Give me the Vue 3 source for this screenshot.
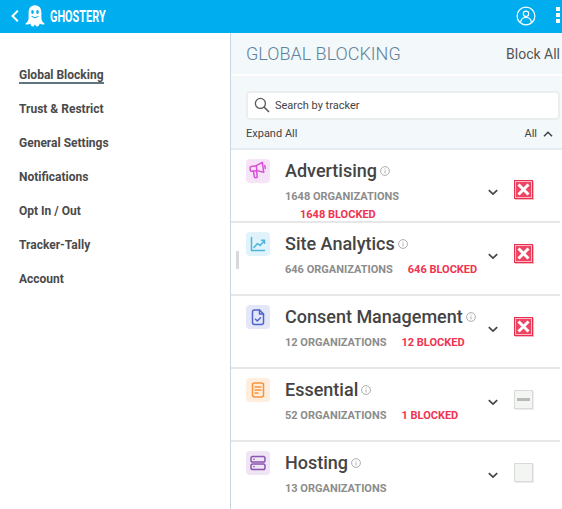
<script setup>
const nav = ['Global Blocking', 'Trust & Restrict', 'General Settings', 'Notifications', 'Opt In / Out', 'Tracker-Tally', 'Account']
const rows = [
  { name: 'Advertising', kind: 'ad', orgs: 1648, blocked: 1648, state: 'x' },
  { name: 'Site Analytics', kind: 'chart', orgs: 646, blocked: 646, state: 'x' },
  { name: 'Consent Management', kind: 'doc', orgs: 12, blocked: 12, state: 'x' },
  { name: 'Essential', kind: 'file', orgs: 52, blocked: 1, state: 'dash' },
  { name: 'Hosting', kind: 'server', orgs: 13, blocked: 0, state: 'none' }
]
</script>

<template>
  <div class="app">
    <header class="topbar">
      <svg class="back" viewBox="0 0 8 12" width="8" height="12"><path d="M6.800 .8 1.500 6l5.300 5.200" fill="none" stroke="#fff" stroke-width="2" /></svg>
      <svg class="ghost" viewBox="0 0 20 22" width="20" height="22">
        <path d="M10 .3C5.200.3 3.600 4 3.600 8v5c0 2.400-1.400 4.700-3.500 6 2.200 1 3.900.5 5.100-.4.600 2 1.500 3 2.500 3 1 0 1.500-1 2.300-2.200.8 1.200 1.300 2.200 2.300 2.200 1 0 1.900-1 2.500-3 1.200.9 2.900 1.400 5.100.4-2.100-1.300-3.500-3.600-3.500-6V8c0-4-1.600-7.700-6.400-7.700z" fill="#fff" />
        <ellipse cx="7.500" cy="7" rx="1.300" ry="1.900" fill="#00aef0" />
        <ellipse cx="12.500" cy="7" rx="1.300" ry="1.900" fill="#00aef0" />
        <path d="M6.600 11c1.700 2.100 5.100 2.100 6.800 0" fill="none" stroke="#00aef0" stroke-width="1.100" />
      </svg>
      <span class="brand">GHOSTERY</span>
      <span class="spacer"></span>
      <svg class="user" viewBox="0 0 20 20" width="20" height="20" fill="none" stroke="#fff" stroke-width="1.200">
        <circle cx="10" cy="10" r="8.900" />
        <circle cx="10" cy="7.800" r="2.700" />
        <path d="M4.600 16.500c.3-3.400 2.400-5 5.400-5s5.100 1.600 5.400 5" />
      </svg>
      <span class="dots"><i></i><i></i><i></i></span>
    </header>
    <div class="body">
      <nav class="side">
        <a v-for="(n, i) in nav" :key="n" class="nav-item"><span :class="{ active: i === 0 }">{{ n }}</span></a>
      </nav>
      <main class="panel">
        <span class="handle"></span>
        <div class="head">
          <span class="title">GLOBAL BLOCKING</span>
          <span class="block-all">Block All</span>
        </div>
        <div class="tools">
          <div class="search">
            <svg viewBox="0 0 16 16" width="16" height="16" fill="none" stroke="#5a5a5a" stroke-width="1.300"><circle cx="6.400" cy="6.400" r="5" /><path d="m10 10 5 5" stroke-width="1.600" /></svg>
            <span>Search by tracker</span>
          </div>
          <div class="expand">
            <span>Expand All</span>
            <span class="all">All
              <svg viewBox="0 0 10 6" width="10" height="6"><path d="M1 5.200 5 1.300l4 3.900" fill="none" stroke="#444" stroke-width="1.600" /></svg>
            </span>
          </div>
        </div>
        <section v-for="r in rows" :key="r.name" class="row">
          <span class="icon" :class="r.kind">
            <svg viewBox="0 0 24 24" width="24" height="24" fill="none" stroke="currentColor" stroke-width="1.500" stroke-linejoin="round" stroke-linecap="round">
              <g v-if="r.kind === 'ad'" transform="rotate(-8 12 12)">
                <path d="M6 6.500h5l6.500-2.500v10L11 11.500H6A1.500 1.500 0 0 1 4.500 10V8A1.500 1.500 0 0 1 6 6.500z" />
                <path d="M7.500 11.500v5.300a1.500 1.500 0 0 0 3 0v-5.300M19.500 7.500v3M11 6.500v5" />
              </g>
              <template v-else-if="r.kind === 'chart'">
                <path d="M5.500 5.500v13h13" />
                <path d="m8 15.500 3.500-4 2.500 2 4.500-5M15.500 8.300h3v3" />
              </template>
              <template v-else-if="r.kind === 'doc'">
                <path d="M8.500 5h5l4 4v8.500a2 2 0 0 1-2 2h-7a2 2 0 0 1-2-2V7a2 2 0 0 1 2-2z" />
                <path d="M13.500 5v4h4M9.500 14.300l1.800 1.700 3.200-3.200" />
              </template>
              <template v-else-if="r.kind === 'file'">
                <rect x="6.500" y="5" width="11" height="14" rx="2" />
                <path d="M9 9h6M9 12h6M9 15h3" />
              </template>
              <template v-else>
                <rect x="5" y="5.500" width="14" height="5.500" rx="1.800" />
                <rect x="5" y="13" width="14" height="5.500" rx="1.800" />
                <path d="M7.500 8.200h1M7.500 15.700h1" stroke-width="1" />
              </template>
            </svg>
          </span>
          <div class="info">
            <h2>{{ r.name }}
              <svg class="tip" viewBox="0 0 10 10" width="10" height="10" fill="none" stroke="#999" stroke-width=".8"><circle cx="5" cy="5" r="4.400" /><path d="M5 4.400v3M5 2.500v1" /></svg>
            </h2>
            <div class="meta">
              <span class="orgs">{{ r.orgs }} ORGANIZATIONS</span>
              <span v-if="r.blocked" class="blocked">{{ r.blocked }} BLOCKED</span>
            </div>
          </div>
          <div class="actions">
            <svg class="chev" viewBox="0 0 10 7" width="10" height="7"><path d="M.8 1.200 5 5.200l4.200-4" fill="none" stroke="#444" stroke-width="1.700" /></svg>
            <span class="check" :class="r.state">
              <svg v-if="r.state === 'x'" viewBox="0 0 13 13" width="13" height="13"><path d="m1.500 1.500 10 10M11.500 1.500l-10 10" stroke="#fff" stroke-width="3" /></svg>
              <span v-else-if="r.state === 'dash'" class="dash-bar"></span>
            </span>
          </div>
        </section>
      </main>
    </div>
  </div>
</template>

<style>
html, body { margin: 0; background: #fff; overflow: hidden; }
</style>

<style scoped>
.app { width: 562px; height: 509px; overflow: hidden; font-family: Roboto, "Liberation Sans", sans-serif; color: #444; }
.topbar { height: 33px; background: #00aef0; display: flex; align-items: center; box-sizing: border-box; padding: 0 2px 0 11px; }
.back { margin-right: 6px; margin-top: -2px; }
.ghost { margin-right: 5px; margin-top: -2px; }
.brand { color: #fff; font-size: 17px; font-weight: 700; width: 49px; white-space: nowrap; transform: scaleX(.64); transform-origin: left center; margin-top: -2px; }
.spacer { flex: 1; }
.user { margin-right: 20px; margin-top: -2px; }
.dots { display: flex; flex-direction: column; gap: 2px; margin-top: -3px; }
.dots i { display: block; width: 4px; height: 4px; background: #fff; }
.body { display: flex; height: 476px; }
.side { width: 230px; flex: none; box-sizing: border-box; padding: 25px 0 0 19px; }
.nav-item { display: block; height: 34px; line-height: 34px; font-size: 12px; font-weight: 700; color: #4a4a4a; white-space: nowrap; }
.active { display: inline-block; line-height: 14px; border-bottom: 2px solid #5f7680; }
.panel { position: relative; flex: 1; min-width: 0; border-left: 1px solid #c9d6dc; }
.handle { position: absolute; left: 5px; top: 218px; width: 3px; height: 18px; background: #d5d9db; }
.head { height: 41px; background: #f3f8fb; display: flex; justify-content: space-between; align-items: center; padding: 0 2px 0 15px; }
.title { font-size: 18px; font-weight: 300; color: #5f819a; white-space: nowrap; }
.block-all { font-size: 14px; color: #555; white-space: nowrap; }
.tools { margin-top: 2px; height: 74px; box-sizing: border-box; background: #f3f8fb; border-bottom: 2px solid #e5ebee; padding: 15px 2px 0 15px; }
.search { height: 29px; box-sizing: border-box; background: #fff; border: 2px solid #ebeeef; border-radius: 4px; display: flex; align-items: center; padding: 0 0 1px 6px; gap: 5px; font-size: 11px; color: #444; }
.expand { display: flex; justify-content: space-between; align-items: center; font-size: 11px; color: #444; margin-top: 7px; padding-right: 7px; }
.all { display: flex; align-items: center; gap: 6px; }
.row { height: 73px; box-sizing: border-box; border-bottom: 2px solid #e7e7e7; margin-right: 2px; display: flex; align-items: flex-start; padding: 8px 0 0 15px; }
.icon { width: 24px; height: 24px; flex: none; border-radius: 4px; margin: 1px 15px 0 0; display: block; }
.icon svg { display: block; }
.ad { background: #f7e3f7; color: #d94fd9; }
.chart { background: #e0f3fb; color: #4db5dc; }
.doc { background: #e4e7f8; color: #4f63cf; }
.file { background: #ffeedd; color: #f7943c; }
.server { background: #efe5f5; color: #8a55b0; }
.info { width: 197px; flex: none; min-height: 47px; }
h2 { margin: 0; font-size: 18px; font-weight: 500; line-height: 26px; height: 30px; color: #444; white-space: nowrap; display: flex; align-items: center; gap: 3px; padding-bottom: 4px; box-sizing: border-box; }
.tip { flex: none; }
.meta { display: flex; flex-wrap: wrap; font-size: 11px; font-weight: 700; line-height: 18px; }
.orgs { color: #8c8c8c; white-space: nowrap; }
.blocked { color: #ef3350; margin-left: 15px; white-space: nowrap; }
.actions { height: 47px; margin-top: 2px; align-self: flex-start; display: flex; align-items: center; }
.row:first-of-type .actions { height: 65px; }
.chev { margin-left: 6px; margin-right: 16px; }
.check { width: 19px; height: 19px; margin-top: -7px; box-sizing: border-box; display: flex; align-items: center; justify-content: center; }
.check.x { background: #ef4565; border: 1px solid #e8304f; box-shadow: inset 0 0 0 1px #fbb9c6, 1px 1px 0 #f8b4c0; }
.check.dash { background: #f3f5f3; border: 1px solid #d9dbd9; box-shadow: 1px 1px 0 #eceeec; }
.check.none { background: #f3f5f3; border: 1px solid #d9dbd9; box-shadow: 1px 1px 0 #eceeec; }
.dash-bar { width: 13px; height: 3px; background: #b8bab8; }
</style>
